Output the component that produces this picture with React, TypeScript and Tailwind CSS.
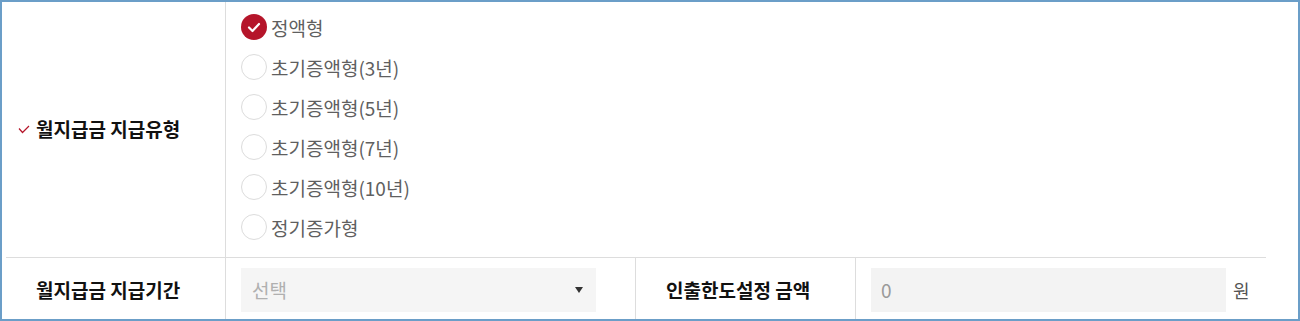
import React, { useState } from 'react';

const options = ['정액형', '초기증액형(3년)', '초기증액형(5년)', '초기증액형(7년)', '초기증액형(10년)', '정기증가형'];

const fontStack = { fontFamily: '"Noto Sans CJK KR", "Noto Sans", sans-serif' };

function Radio({ label, checked, onClick }: { label: string; checked: boolean; onClick: () => void }) {
  return (
    <button type="button" onClick={onClick} className="flex h-10 items-center text-left">
      {checked ? (
        <span className="flex h-[26px] w-[26px] items-center justify-center rounded-full bg-[#b5152a]">
          <svg width="14" height="11" viewBox="0 0 14 11" fill="none">
            <polyline points="2,5.5 5.5,9 12,2" stroke="#fff" strokeWidth="2.2" strokeLinecap="round" strokeLinejoin="round" />
          </svg>
        </span>
      ) : (
        <span className="h-[26px] w-[26px] rounded-full border border-[#dcdcdc] bg-white" />
      )}
      <span className="ml-[4px] text-[19px] leading-none text-[#5f5f5f]">{label}</span>
    </button>
  );
}

export default function App() {
  const [selected, setSelected] = useState(0);

  return (
    <div className="h-[321px] w-[1300px] overflow-hidden border-2 border-[#6b9ec8] bg-white" style={fontStack}>
      <div className="ml-[4px] w-[1260px]">
        {/* 지급유형 */}
        <div className="flex border-b border-[#dddddd]">
          <div className="flex w-[220px] shrink-0 items-center border-r border-[#dddddd] pl-[12px]">
            <svg width="12" height="9" viewBox="0 0 12 9" fill="none" className="mr-[6px]">
              <polyline points="1,3.5 4.5,7.5 11,1" stroke="#b5152a" strokeWidth="1.2" />
            </svg>
            <span className="text-[19px] font-bold text-[#111]">월지급금 지급유형</span>
          </div>
          <div className="flex flex-col pl-[15px] pt-[5px] pb-[10px]">
            {options.map((o, i) => (
              <Radio key={o} label={o} checked={selected === i} onClick={() => setSelected(i)} />
            ))}
          </div>
        </div>

        {/* 지급기간 / 인출한도 */}
        <div className="flex py-[10px]">
          <div className="flex w-[220px] shrink-0 items-center pl-[30px] -my-[10px] border-r border-[#dddddd]">
            <span className="text-[19px] font-bold text-[#111]">월지급금 지급기간</span>
          </div>
          <div className="flex w-[410px] shrink-0 items-center pl-[15px] -my-[10px] py-[10px] border-r border-[#dddddd]">
            <div className="flex h-[44px] w-[355px] items-center justify-between bg-[#f5f5f5] pl-[11px] pr-[13px]">
              <span className="text-[19px] text-[#b0b0b0]">선택</span>
              <span className="h-0 w-0 border-x-[4px] border-t-[6px] border-x-transparent border-t-[#333]" />
            </div>
          </div>
          <div className="flex w-[220px] shrink-0 items-center pl-[30px] -my-[10px] border-r border-[#dddddd]">
            <span className="text-[19px] font-bold text-[#111]">인출한도설정 금액</span>
          </div>
          <div className="flex items-center pl-[15px]">
            <div className="flex h-[44px] w-[355px] items-center bg-[#f3f3f3] pl-[10px]">
              <span className="text-[19px] text-[#9a9a9a]">0</span>
            </div>
            <span className="ml-[7px] text-[18px] text-[#555]">원</span>
          </div>
        </div>
      </div>
    </div>
  );
}
